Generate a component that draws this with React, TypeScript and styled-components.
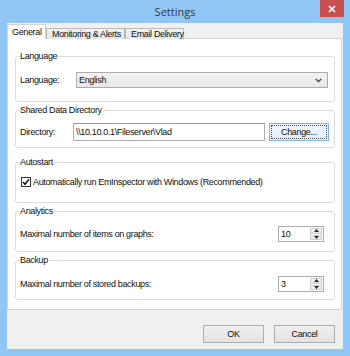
import React from "react";
import styled, { createGlobalStyle } from "styled-components";

const UI_FONT = `"Liberation Sans", Arial, sans-serif`;

const GlobalStyle = createGlobalStyle`
  html, body { margin: 0; padding: 0; }
  body {
    width: 350px;
    height: 356px;
    overflow: hidden;
    font-family: ${UI_FONT};
    font-size: 9px;
    letter-spacing: -0.35px;
    color: #0f0f0f;
  }
  * { box-sizing: border-box; }
`;

const Window = styled.div`
  width: 350px;
  height: 356px;
  background: #8fc6f4;
  display: flex;
  flex-direction: column;
  padding: 0 7px 7px;
`;

const TitleBar = styled.div`
  height: 23px;
  margin: 0 -7px;
  display: grid;
  grid-template-columns: 1fr auto 1fr;
  align-items: start;
`;

const Title = styled.div`
  grid-column: 2;
  font-family: "Open Sans", "Noto Sans", sans-serif;
  font-size: 11px;
  letter-spacing: 0;
  line-height: 23px;
  color: #2f3a45;
`;

const CloseButton = styled.div`
  grid-column: 3;
  justify-self: end;
  margin-right: 6px;
  width: 24px;
  height: 17px;
  background: #c75050;
  display: flex;
  align-items: center;
  justify-content: center;
`;

const Client = styled.div`
  flex: 1;
  background: #f0f0f0;
  display: flex;
  flex-direction: column;
  padding-top: 1px;
`;

const TabStrip = styled.div`
  height: 15px;
  display: flex;
  align-items: flex-end;
`;

const Tab = styled.div<{ $active?: boolean; $w: number }>`
  position: relative;
  z-index: ${(p) => (p.$active ? 1 : 0)};
  width: ${(p) => p.$w}px;
  height: ${(p) => (p.$active ? 15 : 11)}px;
  border: 1px solid ${(p) => (p.$active ? "#d4d4d4" : "#b9b9b9")};
  border-bottom: none;
  background: ${(p) =>
    p.$active ? "#ffffff" : "linear-gradient(#f2f2f2, #e6e6e6)"};
  padding-left: ${(p) => (p.$active ? 4 : 5)}px;
  line-height: ${(p) => (p.$active ? 15 : 11)}px;
  white-space: nowrap;
`;

const Pane = styled.div`
  height: 272px;
  margin: -1px 1px 0 0;
  background: #ffffff;
  border: 1px solid #d4d4d4;
  padding: 0 6px 0 7px;
  display: flex;
  flex-direction: column;
`;

const GroupBox = styled.div<{ $h: number; $mt: number }>`
  height: ${(p) => p.$h}px;
  margin-top: ${(p) => p.$mt}px;
  border: 1px solid #dcdcdc;
  border-radius: 3px;
  padding-left: 4px;
  display: flex;
  flex-direction: column;
`;

const GroupTitle = styled.div<{ $gap: number }>`
  align-self: flex-start;
  height: 13px;
  line-height: 13px;
  margin: -7px 0 ${(p) => p.$gap}px 0;
  padding-right: 1px;
  background: #ffffff;
`;

const Row = styled.div`
  display: flex;
  align-items: center;
`;

const Label = styled.div<{ $w?: number }>`
  width: ${(p) => (p.$w ? `${p.$w}px` : "auto")};
  white-space: nowrap;
`;

const Dropdown = styled.div`
  width: 252px;
  height: 16px;
  border: 1px solid #acacac;
  background: linear-gradient(#f3f3f3, #e8e8e8);
  display: flex;
  align-items: center;
  justify-content: space-between;
  padding: 0 5px 0 2px;
`;

const TextBox = styled.div`
  width: 192px;
  height: 18px;
  border: 1px solid #abadb3;
  border-top-color: #9a9ca3;
  background: #fff;
  padding-left: 2px;
  line-height: 16px;
  white-space: nowrap;
`;

const PushButton = styled.div<{ $w: number; $focused?: boolean }>`
  width: ${(p) => p.$w}px;
  height: 18px;
  margin-left: ${(p) => (p.$focused ? 4 : 0)}px;
  border: 1px solid ${(p) => (p.$focused ? "#7db5ea" : "#adadad")};
  background: ${(p) =>
    p.$focused ? "linear-gradient(#f1f6fb, #e3eefa)" : "linear-gradient(#f0f0f0, #e3e3e3)"};
  display: flex;
  align-items: center;
  justify-content: center;
  outline: ${(p) => (p.$focused ? "1px dotted #4a4a4a" : "none")};
  outline-offset: -3px;
`;

const CheckBox = styled.div`
  width: 10px;
  height: 10px;
  margin: 0 2px 0 1px;
  border: 1px solid #333;
  background: #fff;
  display: flex;
  align-items: center;
  justify-content: center;
`;

const Spin = styled.div`
  margin-left: auto;
  margin-right: 10px;
  width: 46px;
  height: 16px;
  border: 1px solid #abadb3;
  background: #fff;
  display: flex;
  align-items: center;
  padding: 1px 1px 1px 2px;
`;

const SpinValue = styled.div`
  flex: 1;
  line-height: 14px;
`;

const SpinButtons = styled.div`
  width: 12px;
  height: 100%;
  display: flex;
  flex-direction: column;
  gap: 1px;
`;

const SpinArrow = styled.div`
  flex: 1;
  border: 1px solid #cfcfcf;
  background: linear-gradient(#f4f4f4, #e4e4e4);
  display: flex;
  align-items: center;
  justify-content: center;
`;

const Footer = styled.div`
  flex: 1;
  display: flex;
  justify-content: flex-end;
  align-items: flex-start;
  gap: 10px;
  padding: 15px 8px 0 0;
`;

const Chevron = () => (
  <svg width="7" height="5" viewBox="0 0 7 5">
    <path d="M0.8 1 L3.5 3.7 L6.2 1" fill="none" stroke="#3c3c3c" strokeWidth="1.2" />
  </svg>
);

const Arrow = ({ up }: { up?: boolean }) => (
  <svg width="5" height="3" viewBox="0 0 5 3">
    <path d={up ? "M0 3 L2.5 0 L5 3 Z" : "M0 0 L2.5 3 L5 0 Z"} fill="#2a2a2a" />
  </svg>
);

const SpinBox = ({ value }: { value: string }) => (
  <Spin>
    <SpinValue>{value}</SpinValue>
    <SpinButtons>
      <SpinArrow>
        <Arrow up />
      </SpinArrow>
      <SpinArrow>
        <Arrow />
      </SpinArrow>
    </SpinButtons>
  </Spin>
);

export default function App() {
  return (
    <>
      <GlobalStyle />
      <Window>
        <TitleBar>
          <Title>Settings</Title>
          <CloseButton>
            <svg width="8" height="8" viewBox="0 0 8 8">
              <path d="M1 1 L7 7 M7 1 L1 7" stroke="#fff" strokeWidth="1.6" />
            </svg>
          </CloseButton>
        </TitleBar>
        <Client>
          <TabStrip>
            <Tab $active $w={39}>General</Tab>
            <Tab $w={79}>Monitoring &amp; Alerts</Tab>
            <Tab $w={59}>Email Delivery</Tab>
          </TabStrip>
          <Pane>
            <GroupBox $h={46} $mt={17}>
              <GroupTitle $gap={9}>Language</GroupTitle>
              <Row>
                <Label $w={56}>Language:</Label>
                <Dropdown>
                  <span>English</span>
                  <Chevron />
                </Dropdown>
              </Row>
            </GroupBox>
            <GroupBox $h={38} $mt={8}>
              <GroupTitle $gap={6}>Shared Data Directory</GroupTitle>
              <Row>
                <Label $w={53}>Directory:</Label>
                <TextBox>\\10.10.0.1\Fileserver\Vlad</TextBox>
                <PushButton $w={60} $focused>
                  Change...
                </PushButton>
              </Row>
            </GroupBox>
            <GroupBox $h={41} $mt={14}>
              <GroupTitle $gap={8}>Autostart</GroupTitle>
              <Row>
                <CheckBox>
                  <svg width="8" height="8" viewBox="0 0 8 8">
                    <path d="M1 4 L3 6.3 L7 1.2" fill="none" stroke="#111" strokeWidth="1.4" />
                  </svg>
                </CheckBox>
                <Label>Automatically run EmInspector with Windows (Recommended)</Label>
              </Row>
            </GroupBox>
            <GroupBox $h={41} $mt={8}>
              <GroupTitle $gap={8}>Analytics</GroupTitle>
              <Row>
                <Label>Maximal number of items on graphs:</Label>
                <SpinBox value="10" />
              </Row>
            </GroupBox>
            <GroupBox $h={40} $mt={8}>
              <GroupTitle $gap={9}>Backup</GroupTitle>
              <Row>
                <Label>Maximal number of stored backups:</Label>
                <SpinBox value="3" />
              </Row>
            </GroupBox>
          </Pane>
          <Footer>
            <PushButton $w={61}>OK</PushButton>
            <PushButton $w={61}>Cancel</PushButton>
          </Footer>
        </Client>
      </Window>
    </>
  );
}
